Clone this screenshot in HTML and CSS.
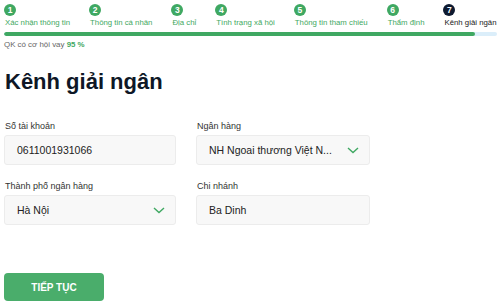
FILE: index.html
```html
<!DOCTYPE html>
<html lang="vi">
<head>
<meta charset="utf-8">
<title>Kênh giải ngân</title>
<link rel="stylesheet" href="styles.css">
</head>
<body>
<div class="page">
  <div class="steps">
    <div class="step"><span class="dot">1</span><span class="step-label">Xác nhận thông tin</span></div>
    <div class="step"><span class="dot">2</span><span class="step-label">Thông tin cá nhân</span></div>
    <div class="step"><span class="dot">3</span><span class="step-label">Địa chỉ</span></div>
    <div class="step"><span class="dot">4</span><span class="step-label">Tình trạng xã hội</span></div>
    <div class="step"><span class="dot">5</span><span class="step-label">Thông tin tham chiếu</span></div>
    <div class="step"><span class="dot">6</span><span class="step-label">Thẩm định</span></div>
    <div class="step current"><span class="dot">7</span><span class="step-label">Kênh giải ngân</span></div>
  </div>
  <div class="progress"><div class="progress-fill" style="width:95.5%"></div></div>
  <p class="chance">QK có cơ hội vay <b>95 %</b></p>

  <h1 class="title">Kênh giải ngân</h1>

  <div class="form">
    <div class="field">
      <label class="field-label">Số tài khoản</label>
      <div class="box">0611001931066</div>
    </div>
    <div class="field">
      <label class="field-label">Ngân hàng</label>
      <div class="box select">
        <span>NH Ngoai thương Việt N...</span>
        <svg class="chev" width="12" height="7" viewBox="0 0 12 7"><polyline points="1,1 6,5.5 11,1" fill="none" stroke="#3fa862" stroke-width="1.4"/></svg>
      </div>
    </div>
    <div class="field">
      <label class="field-label">Thành phố ngân hàng</label>
      <div class="box select">
        <span>Hà Nội</span>
        <svg class="chev" width="12" height="7" viewBox="0 0 12 7"><polyline points="1,1 6,5.5 11,1" fill="none" stroke="#3fa862" stroke-width="1.4"/></svg>
      </div>
    </div>
    <div class="field">
      <label class="field-label">Chi nhánh</label>
      <div class="box">Ba Dinh</div>
    </div>
  </div>

  <button class="btn">TIẾP TỤC</button>
</div>
</body>
</html>
```

FILE: styles.css
```css
html, body {
  margin: 0;
  padding: 0;
  background: #ffffff;
}
body {
  font-family: "Liberation Sans", Arial, sans-serif;
  color: #222;
}
.page {
  padding: 4px 3px 0 4px;
}
.steps {
  display: flex;
  gap: 20px;
  white-space: nowrap;
  padding-left: 1px;
}
.step {
  display: flex;
  flex-direction: column;
  align-items: flex-start;
}
.dot {
  width: 12px;
  height: 12px;
  margin-left: -1px;
  border-radius: 50%;
  background: #3fa862;
  color: #fff;
  font-weight: bold;
  font-size: 8.5px;
  line-height: 12px;
  text-align: center;
  margin-bottom: 1.5px;
}
.step-label {
  font-size: 7.8px;
  line-height: 9px;
  color: #3fa862;
}
.current .dot {
  background: #0e1a30;
}
.current .step-label {
  color: #222;
}
.progress {
  margin-top: 5.5px;
  height: 4px;
  border-radius: 2px;
  background: #dbeefa;
  overflow: hidden;
}
.progress-fill {
  height: 100%;
  background: #3fa862;
  border-radius: 2px;
}
.chance {
  margin: 4px 0 0;
  font-size: 7.9px;
  line-height: 9px;
  color: #666;
}
.chance b {
  color: #3fa862;
}
.title {
  margin: 20px 0 0 1px;
  font-size: 22px;
  line-height: 25px;
  font-weight: bold;
  color: #0e1726;
}
.form {
  margin-top: 27px;
  display: grid;
  grid-template-columns: 172px 174px;
  column-gap: 20px;
  row-gap: 16px;
}
.field {
  display: flex;
  flex-direction: column;
}
.field-label {
  font-size: 9px;
  line-height: 10px;
  color: #333;
  padding-left: 1px;
  margin-bottom: 4px;
}
.box {
  height: 30px;
  box-sizing: border-box;
  border: 1px solid #ececec;
  border-radius: 3px;
  background: #f8f8f8;
  padding: 0 10px 0 12px;
  display: flex;
  align-items: center;
  font-size: 10.5px;
  color: #222;
}
.select {
  justify-content: space-between;
}
.chev {
  display: block;
}
.btn {
  margin-top: 48px;
  width: 100px;
  height: 28px;
  border: none;
  border-radius: 4px;
  background: #4aad6b;
  color: #fff;
  font-family: "Liberation Sans", Arial, sans-serif;
  font-weight: bold;
  font-size: 10px;
  padding: 0;
  display: block;
}
```
